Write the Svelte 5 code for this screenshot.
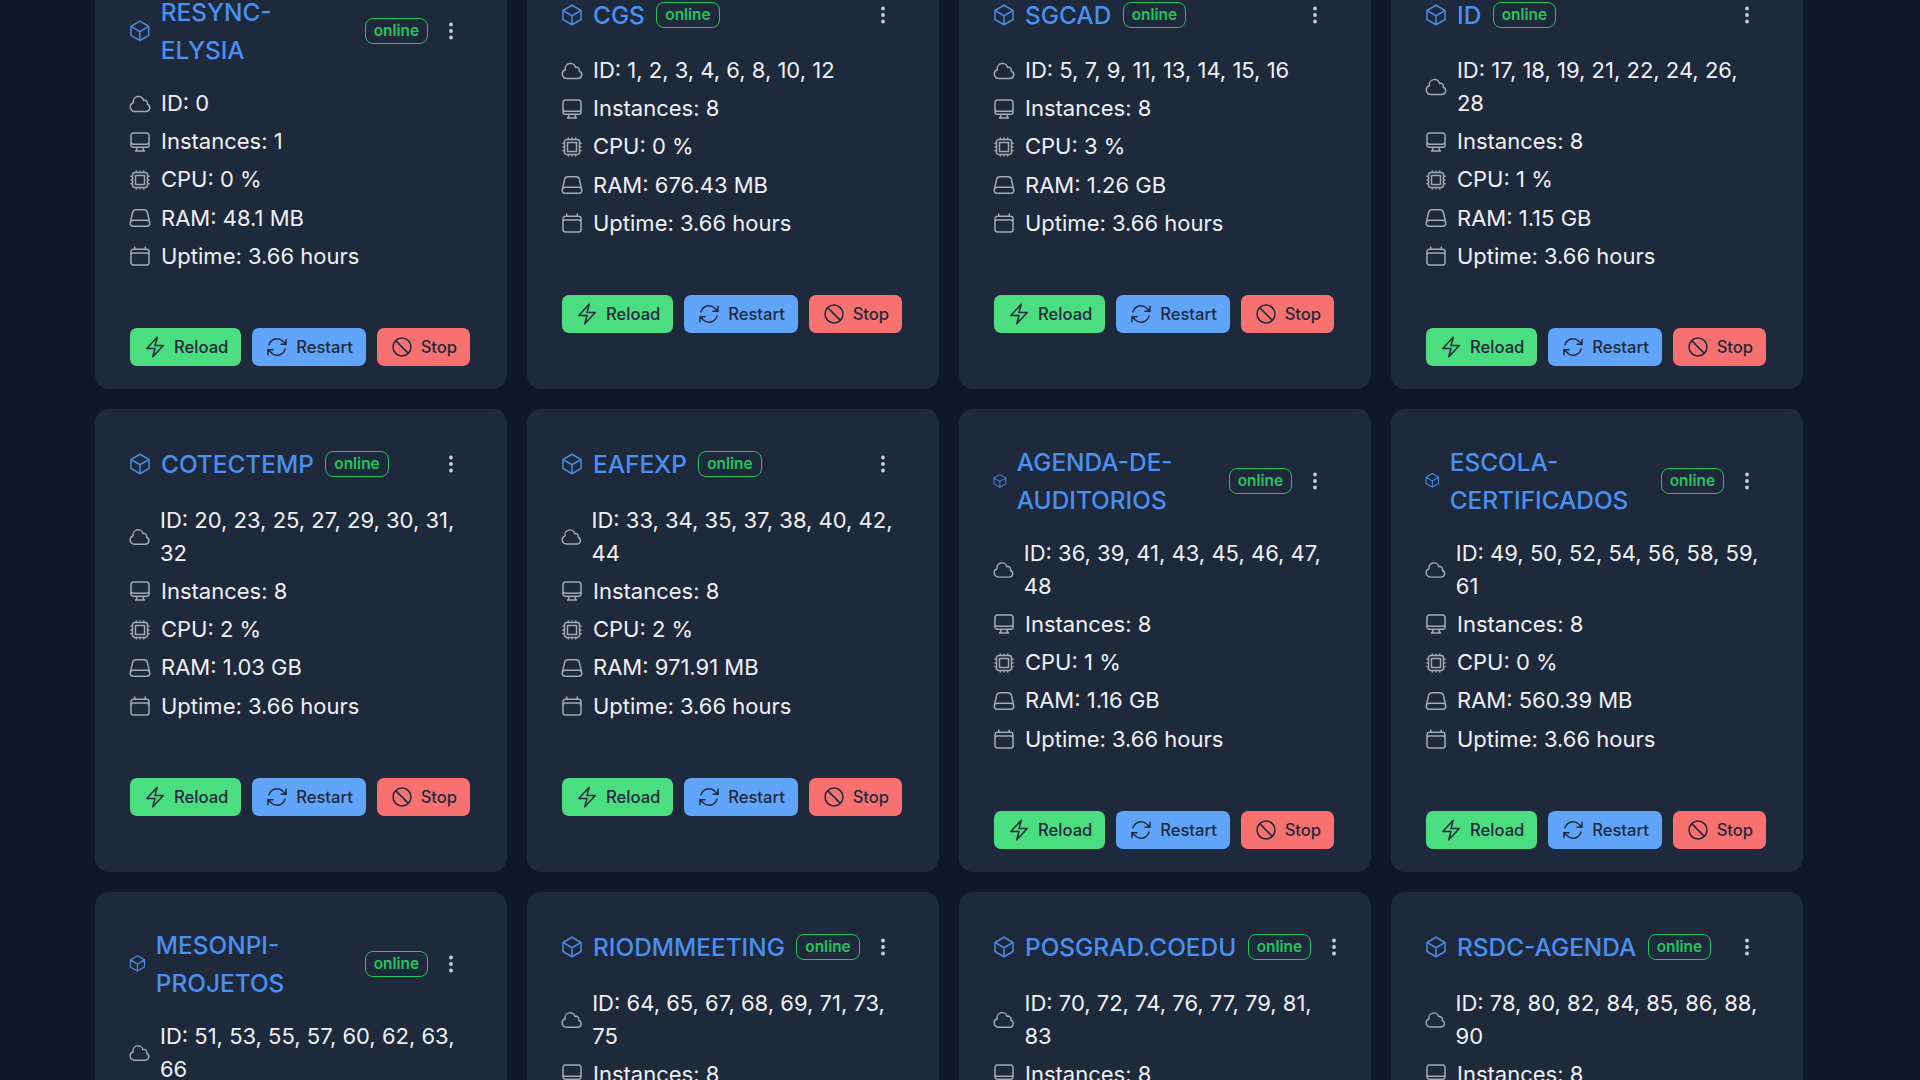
<script lang="ts">
  const apps = [
    { name: 'RESYNC-ELYSIA', ids: '0', instances: 1, cpu: 0, ram: '48.1 MB' },
    { name: 'CGS', ids: '1, 2, 3, 4, 6, 8, 10, 12', instances: 8, cpu: 0, ram: '676.43 MB' },
    { name: 'SGCAD', ids: '5, 7, 9, 11, 13, 14, 15, 16', instances: 8, cpu: 3, ram: '1.26 GB' },
    { name: 'ID', ids: '17, 18, 19, 21, 22, 24, 26, 28', instances: 8, cpu: 1, ram: '1.15 GB' },
    { name: 'COTECTEMP', ids: '20, 23, 25, 27, 29, 30, 31, 32', instances: 8, cpu: 2, ram: '1.03 GB' },
    { name: 'EAFEXP', ids: '33, 34, 35, 37, 38, 40, 42, 44', instances: 8, cpu: 2, ram: '971.91 MB' },
    { name: 'AGENDA-DE-AUDITORIOS', ids: '36, 39, 41, 43, 45, 46, 47, 48', instances: 8, cpu: 1, ram: '1.16 GB' },
    { name: 'ESCOLA-CERTIFICADOS', ids: '49, 50, 52, 54, 56, 58, 59, 61', instances: 8, cpu: 0, ram: '560.39 MB' },
    { name: 'MESONPI-PROJETOS', ids: '51, 53, 55, 57, 60, 62, 63, 66', instances: 8, cpu: 0, ram: '' },
    { name: 'RIODMMEETING', ids: '64, 65, 67, 68, 69, 71, 73, 75', instances: 8, cpu: 0, ram: '' },
    { name: 'POSGRAD.COEDU', ids: '70, 72, 74, 76, 77, 79, 81, 83', instances: 8, cpu: 0, ram: '' },
    { name: 'RSDC-AGENDA', ids: '78, 80, 82, 84, 85, 86, 88, 90', instances: 8, cpu: 0, ram: '' },
  ];

  const icons: Record<string, string> = {
    cloud: 'M2.25 15a4.5 4.5 0 0 0 4.5 4.5H18a3.75 3.75 0 0 0 1.332-7.257 3 3 0 0 0-3.758-3.848 5.25 5.25 0 0 0-10.233 2.33A4.5 4.5 0 0 0 2.25 15Z',
    monitor: 'M9 17.25v1.007a3 3 0 0 1-.879 2.122L7.5 21h9l-.621-.621A3 3 0 0 1 15 18.257V17.25m6-12V15a2.25 2.25 0 0 1-2.25 2.25H5.25A2.25 2.25 0 0 1 3 15V5.25m18 0A2.25 2.25 0 0 0 18.75 3H5.25A2.25 2.25 0 0 0 3 5.25m18 0V12a2.25 2.25 0 0 1-2.25 2.25H5.25A2.25 2.25 0 0 1 3 12V5.25',
    cpu: 'M8.25 3v1.5M4.5 8.25H3m18 0h-1.5M4.5 12H3m18 0h-1.5m-15 3.75H3m18 0h-1.5M8.25 19.5V21M12 3v1.5m0 15V21m3.75-18v1.5m0 15V21m-9-1.5h10.5a2.25 2.25 0 0 0 2.25-2.25V6.75a2.25 2.25 0 0 0-2.25-2.25H6.75A2.25 2.25 0 0 0 4.5 6.75v10.5a2.25 2.25 0 0 0 2.25 2.25Zm.75-12h9v9h-9v-9Z',
    ram: 'M21.75 17.25v-.228a4.5 4.5 0 0 0-.12-1.03l-2.268-9.64a3.375 3.375 0 0 0-3.285-2.602H7.923a3.375 3.375 0 0 0-3.285 2.602l-2.268 9.64a4.5 4.5 0 0 0-.12 1.03v.228m19.5 0a3 3 0 0 1-3 3H5.25a3 3 0 0 1-3-3m19.5 0a3 3 0 0 0-3-3H5.25a3 3 0 0 0-3 3',
    calendar: 'M6.75 3v2.25M17.25 3v2.25M3 18.75V7.5a2.25 2.25 0 0 1 2.25-2.25h13.5A2.25 2.25 0 0 1 21 7.5v11.25m-18 0A2.25 2.25 0 0 0 5.25 21h13.5A2.25 2.25 0 0 0 21 18.75m-18 0v-7.5A2.25 2.25 0 0 1 5.25 9h13.5A2.25 2.25 0 0 1 21 11.25v7.5',
  };
</script>

{#snippet row(kind: string, text: string)}
  <li>
    <svg class="icon" viewBox="0 0 24 24" aria-hidden="true"><path d={icons[kind]} /></svg>
    <span>{text}</span>
  </li>
{/snippet}

<div class="page">
  <div class="grid">
    {#each apps as app}
      <article class="card">
        <header>
          <div class="head-left">
            <svg class="cube" viewBox="0 0 24 24" aria-hidden="true">
              <path d="m21 7.5-9-5.25L3 7.5m18 0-9 5.25m9-5.25v9l-9 5.25M3 7.5l9 5.25M3 7.5v9l9 5.25m0-9v9" />
            </svg>
            <h2>{app.name}</h2>
            <span class="badge">online</span>
          </div>
          <button class="menu" aria-label="More">
            <svg viewBox="0 0 24 24">
              <path d="M12 6.75a.75.75 0 1 1 0-1.5.75.75 0 0 1 0 1.5ZM12 12.75a.75.75 0 1 1 0-1.5.75.75 0 0 1 0 1.5ZM12 18.75a.75.75 0 1 1 0-1.5.75.75 0 0 1 0 1.5Z" />
            </svg>
          </button>
        </header>

        <ul>
          {@render row('cloud', `ID: ${app.ids}`)}
          {@render row('monitor', `Instances: ${app.instances}`)}
          {@render row('cpu', `CPU: ${app.cpu} %`)}
          {@render row('ram', `RAM: ${app.ram}`)}
          {@render row('calendar', 'Uptime: 3.66 hours')}
        </ul>

        <div class="actions">
          <button class="btn green">
            <svg viewBox="0 0 24 24"><path d="m3.75 13.5 10.5-11.25L12 10.5h8.25L9.75 21.75 12 13.5H3.75Z" /></svg>
            Reload
          </button>
          <button class="btn blue">
            <svg viewBox="0 0 24 24">
              <path d="M16.023 9.348h4.992v-.001M2.985 19.644v-4.992m0 0h4.992m-4.993 0 3.181 3.183a8.25 8.25 0 0 0 13.803-3.7M4.031 9.865a8.25 8.25 0 0 1 13.803-3.7l3.181 3.182m0-4.991v4.99" />
            </svg>
            Restart
          </button>
          <button class="btn red">
            <svg viewBox="0 0 24 24">
              <path d="M18.364 18.364A9 9 0 0 0 5.636 5.636m12.728 12.728A9 9 0 0 1 5.636 5.636m12.728 12.728L5.636 5.636" />
            </svg>
            Stop
          </button>
        </div>
      </article>
    {/each}
  </div>
</div>

<style>
  :global(body) {
    background: #0f172a;
    font-family: Inter, 'Liberation Sans', sans-serif;
  }
  .page {
    height: 100vh;
    overflow: hidden;
    padding: 0 117px 0 95px;
    box-sizing: border-box;
  }
  /* the page is scrolled a little past the top of the first row */
  .grid {
    display: grid;
    grid-template-columns: repeat(4, minmax(0, 1fr));
    gap: 20px;
    margin-top: -41px;
  }
  .card {
    background: #1e293b;
    border-radius: 14px;
    padding: 34px 33px 23px;
  }
  header {
    display: flex;
    justify-content: space-between;
    align-items: center;
    min-height: 43px;
    margin-bottom: 18px;
  }
  .head-left {
    display: flex;
    align-items: center;
    gap: 9px;
  }
  .cube {
    width: 24px;
    fill: none;
    stroke: #4a8ae0;
    stroke-width: 1.5;
    stroke-linejoin: round;
    stroke-linecap: round;
  }
  h2 {
    margin: 0;
    font-size: 24.4px;
    line-height: 38px;
    font-weight: 500;
    color: #4a90f0;
  }
  .badge {
    margin-left: 2.4px;
    font-size: 15.4px;
    font-weight: 600;
    line-height: 24px;
    padding: 0 8px;
    border: 1.3px solid #22c55e;
    border-radius: 8px;
    color: #22c55e;
  }
  .menu {
    flex: 0 0 46px;
    height: 43px;
    background: none;
    border: 0;
    padding: 0;
    display: flex;
    align-items: center;
    justify-content: center;
  }
  .menu svg {
    width: 26px;
    height: 26px;
    fill: none;
    stroke: #d1d5db;
    stroke-width: 2;
  }
  ul {
    list-style: none;
    margin: 0 0 55px;
    padding: 0;
    display: flex;
    flex-direction: column;
    gap: 5.2px;
  }
  li {
    display: flex;
    align-items: center;
    gap: 9px;
    font-size: 22px;
    line-height: 33px;
    color: #eef1f5;
  }
  .icon {
    width: 24px;
    height: 24px;
    fill: none;
    stroke: #a3a9b3;
    stroke-width: 1.5;
    stroke-linejoin: round;
    stroke-linecap: round;
  }
  .actions {
    display: flex;
    gap: 10.8px;
    padding-left: 2px;
  }
  .btn {
    display: flex;
    align-items: center;
    gap: 7px;
    height: 38px;
    padding: 0 13px;
    border: 0;
    border-radius: 7px;
    font-family: inherit;
    font-size: 16.6px;
    font-weight: 500;
    color: #1e293b;
  }
  .btn svg {
    width: 24px;
    height: 24px;
    fill: none;
    stroke: #1e293b;
    stroke-width: 1.5;
    stroke-linejoin: round;
    stroke-linecap: round;
  }
  .green { background: #4ade80; }
  .blue { background: #60a5fa; }
  .red { background: #f87171; }
</style>
